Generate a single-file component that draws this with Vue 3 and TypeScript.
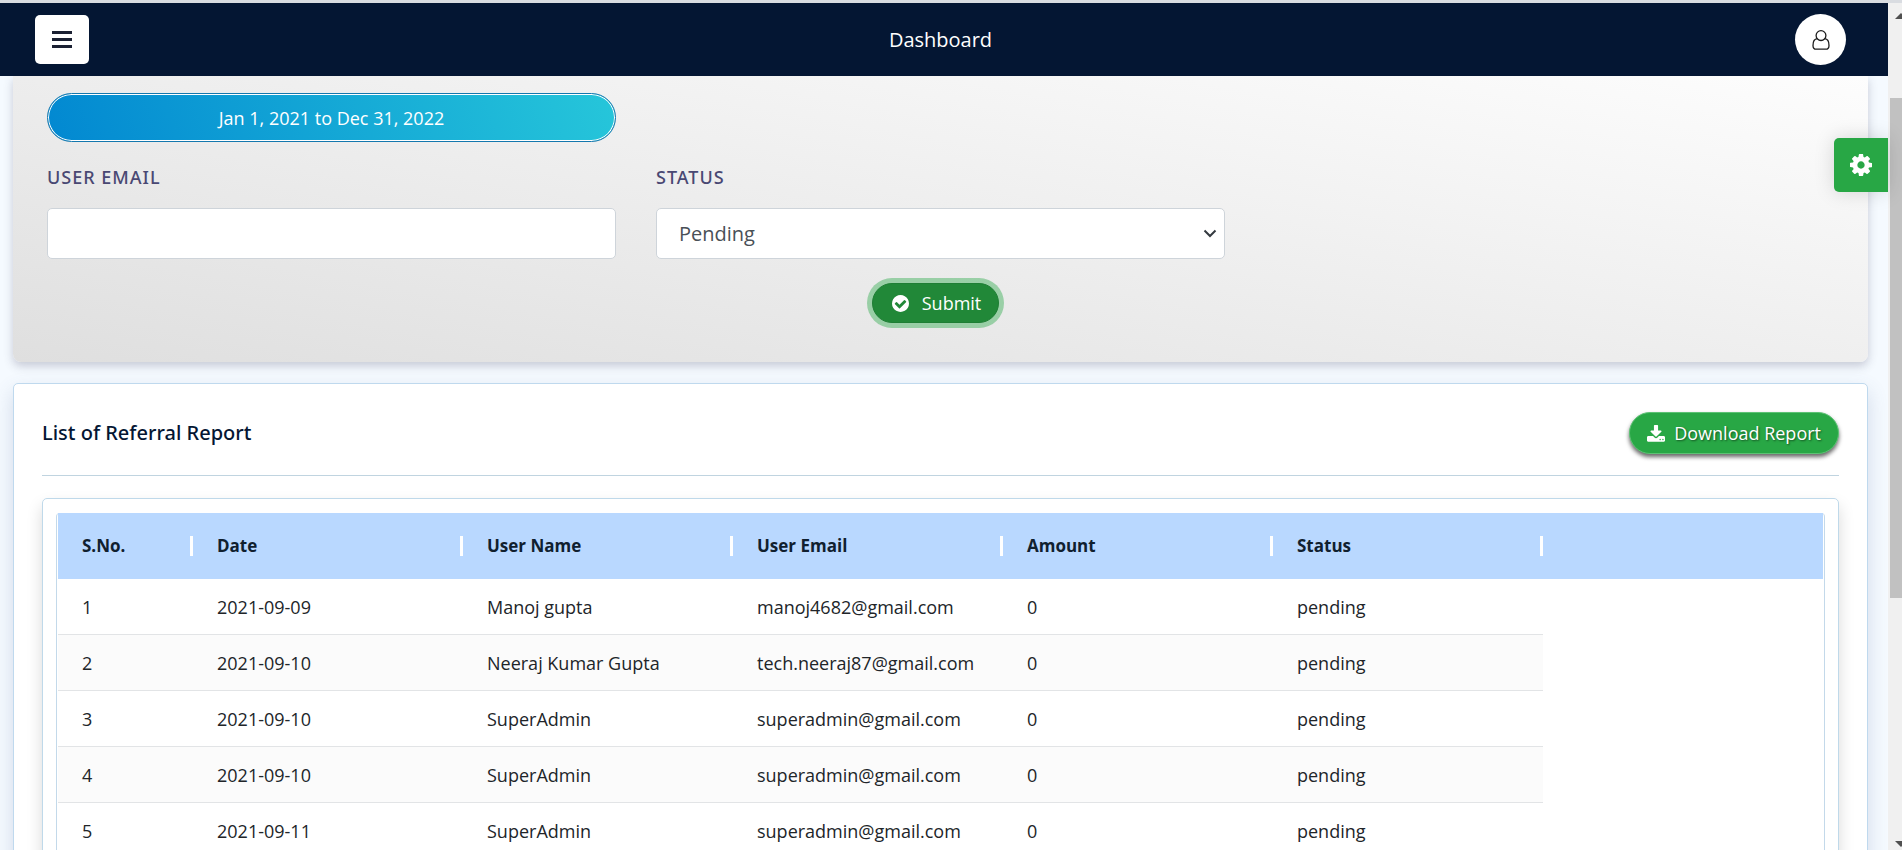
<script setup lang="ts">
import { ref } from 'vue'

interface ReferralRow {
  date: string
  name: string
  email: string
  amount: number
  status: string
}

const email = ref('')
const status = ref('Pending')
const columns: string[] = ['S.No.', 'Date', 'User Name', 'User Email', 'Amount', 'Status']

const rows: ReferralRow[] = [
  { date: '2021-09-09', name: 'Manoj gupta', email: 'manoj4682@gmail.com', amount: 0, status: 'pending' },
  { date: '2021-09-10', name: 'Neeraj Kumar Gupta', email: 'tech.neeraj87@gmail.com', amount: 0, status: 'pending' },
  { date: '2021-09-10', name: 'SuperAdmin', email: 'superadmin@gmail.com', amount: 0, status: 'pending' },
  { date: '2021-09-10', name: 'SuperAdmin', email: 'superadmin@gmail.com', amount: 0, status: 'pending' },
  { date: '2021-09-11', name: 'SuperAdmin', email: 'superadmin@gmail.com', amount: 0, status: 'pending' },
]
</script>

<template>
  <div class="shell">
    <div class="page">
      <header class="topbar">
        <button class="menu-btn" type="button" aria-label="Toggle menu">
          <svg viewBox="0 0 20 17" width="20" height="17" aria-hidden="true">
            <path d="M0 0h20v3H0zM0 7h20v3H0zM0 14h20v3H0z" fill="#1b2133" />
          </svg>
        </button>
        <h1 class="topbar-title">Dashboard</h1>
        <button class="avatar" type="button" aria-label="Account">
          <svg viewBox="0 0 18 20" width="18" height="20" fill="none" stroke="#1c1c1c" stroke-width="1.3" aria-hidden="true">
            <circle cx="9" cy="5.6" r="4.9" />
            <path d="M5.3 8.7C2.4 9 1 12 1 15.4C1 17.6 2.3 19.2 4.2 19.2H13.800C15.700 19.200 17 17.600 17 15.400C17 12 15.600 9 12.700 8.700" />
          </svg>
        </button>
      </header>

      <main class="content">
        <form class="filter-card" @submit.prevent>
          <div class="filter-grid">
            <button class="range-btn" type="button">Jan 1, 2021 to Dec 31, 2022</button>
            <div class="field field-start">
              <label for="user-email">USER EMAIL</label>
              <input id="user-email" v-model="email" class="control" type="text" />
            </div>
            <div class="field">
              <label for="status">STATUS</label>
              <div class="select-wrap">
                <select id="status" v-model="status" class="control">
                  <option>Pending</option>
                </select>
                <svg class="chevron" viewBox="0 0 14 9" width="14" height="9" fill="none" stroke="#343a40" stroke-width="2" aria-hidden="true">
                  <path d="M1.500 1.500L7 7L12.500 1.500" />
                </svg>
              </div>
            </div>
          </div>
          <div class="actions">
            <button class="submit-btn" type="submit">
              <svg viewBox="128 128 1536 1536" width="17" height="17" fill="#fff" aria-hidden="true">
                <path d="M1412 734q0-28-18-46l-91-90q-19-19-45-19t-45 19l-408 407-226-226q-19-19-45-19t-45 19l-91 90q-18 18-18 46 0 27 18 45l362 362q19 19 45 19 27 0 46-19l543-543q18-18 18-45zm252 162q0 209-103 385.500t-279.500 279.500-385.500 103-385.500-103-279.500-279.500-103-385.500 103-385.500 279.500-279.500 385.500-103 385.500 103 279.500 279.500 103 385.500z" />
              </svg>
              <span>Submit</span>
            </button>
          </div>
        </form>

        <section class="report-card">
          <div class="report-head">
            <h2>List of Referral Report</h2>
            <button class="download-btn" type="button">
              <svg viewBox="64 32 1664 1504" width="18" height="17" fill="#fff" aria-hidden="true">
                <path d="M1344 1344q0-26-19-45t-45-19-45 19-19 45 19 45 45 19 45-19 19-45zm256 0q0-26-19-45t-45-19-45 19-19 45 19 45 45 19 45-19 19-45zm128-224v320q0 40-28 68t-68 28h-1472q-40 0-68-28t-28-68v-320q0-40 28-68t68-28h465l135 136q58 56 136 56t136-56l136-136h464q40 0 68 28t28 68zm-325-569q17 41-14 70l-448 448q-18 19-45 19t-45-19l-448-448q-31-29-14-70 17-39 59-39h256v-448q0-26 19-45t45-19h256q26 0 45 19t19 45v448h256q42 0 59 39z" />
              </svg>
              <span>Download Report</span>
            </button>
          </div>

          <div class="table-card">
            <div class="table-frame">
              <table>
                <colgroup>
                  <col class="col-index" />
                  <col v-for="n in 5" :key="n" class="col-data" />
                  <col />
                </colgroup>
                <thead>
                  <tr>
                    <th v-for="c in columns" :key="c" scope="col">
                      <div class="head-cell">{{ c }}</div>
                    </th>
                    <td></td>
                  </tr>
                </thead>
                <tbody>
                  <tr v-for="(r, i) in rows" :key="i">
                    <td>{{ i + 1 }}</td>
                    <td>{{ r.date }}</td>
                    <td>{{ r.name }}</td>
                    <td>{{ r.email }}</td>
                    <td>{{ r.amount }}</td>
                    <td>{{ r.status }}</td>
                  </tr>
                </tbody>
              </table>
            </div>
          </div>
        </section>
      </main>

      <button class="settings-tab" type="button" aria-label="Settings">
        <svg viewBox="0 128 1536 1536" width="22" height="22" fill="#fff" aria-hidden="true">
          <path d="M1024 896q0-106-75-181t-181-75-181 75-75 181 75 181 181 75 181-75 75-181zm512-109v222q0 12-8 23t-20 13l-185 28q-19 54-39 91 35 50 107 138 10 12 10 25t-9 23q-27 37-99 108t-94 71q-12 0-26-9l-138-108q-44 23-91 38-16 136-29 186-7 28-36 28h-222q-14 0-24.500-8.500t-11.500-21.500l-28-184q-49-16-90-37l-141 107q-10 9-25 9-14 0-25-11-126-114-165-168-7-10-7-23 0-12 8-23 15-21 51-66.500t54-70.500q-27-50-41-99l-183-27q-13-2-21-12.500t-8-23.500v-222q0-12 8-23t19-13l186-28q14-46 39-92-40-57-107-138-10-12-10-24 0-10 9-23 26-36 98.500-107.500t94.500-71.500q13 0 26 10l138 107q44-23 91-38 16-136 29-186 7-28 36-28h222q14 0 24.500 8.500t11.500 21.500l28 184q49 16 90 37l142-107q9-9 24-9 13 0 25 10 129 119 165 170 7 8 7 22 0 12-8 23-15 21-51 66.500t-54 70.500q26 50 41 98l183 28q13 2 21 12.500t8 23.500z" />
        </svg>
      </button>
    </div>

    <div class="scroll-track" aria-hidden="true">
      <svg class="arrow" viewBox="0 0 14 6" width="14" height="6"><path d="M7 6L13 0L19 6z" fill="#505050" /></svg>
      <div class="scroll-thumb"></div>
      <svg class="arrow" viewBox="0 0 14 6" width="14" height="6"><path d="M7 0L13 6L19 0z" fill="#505050" /></svg>
    </div>
  </div>
</template>

<style>
body {
  margin: 0;
}
</style>

<style scoped>
.shell {
  box-sizing: border-box;
  display: flex;
  height: 100vh;
  overflow: hidden;
  border-top: 3px solid #d9dce1;
  background: #f5faff;
  font-family: "Open Sans", "Noto Sans", sans-serif;
  font-size: 18px;
  color: #212529;
}
.shell *,
.shell *::before,
.shell *::after {
  box-sizing: border-box;
}
button,
input,
select {
  font: inherit;
  margin: 0;
}
svg {
  display: block;
  flex: none;
}
.page {
  position: relative;
  flex: 1;
  min-width: 0;
}
.topbar {
  position: relative;
  z-index: 2;
  display: grid;
  grid-template-columns: 1fr auto 1fr;
  align-items: center;
  height: 73px;
  padding: 0 42px 0 35px;
  background: #041633;
}
.menu-btn,
.avatar {
  display: flex;
  align-items: center;
  justify-content: center;
  padding: 0;
  border: 0;
  background: #fff;
}
.menu-btn {
  width: 54px;
  height: 49px;
  border-radius: 5px;
}
.avatar {
  justify-self: end;
  width: 51px;
  height: 51px;
  border-radius: 50%;
}
.topbar-title {
  margin: 0;
  font-size: 20px;
  line-height: 28px;
  font-weight: 400;
  color: #fff;
}
.content {
  display: flex;
  flex-direction: column;
  gap: 21px;
  padding: 0 20px 0 13px;
}
.filter-card {
  padding: 17px 34px 34px;
  border-radius: 0 0 8px 8px;
  background: linear-gradient(10deg, #dfdfdf, #fdfdfd);
  box-shadow: 0 4px 10px rgba(60, 60, 90, 0.25);
}
.filter-grid {
  display: grid;
  grid-template-columns: repeat(3, 1fr);
  gap: 22px 40px;
}
.range-btn {
  height: 49px;
  padding: 0;
  border: 1px solid #1478ae;
  border-radius: 25px;
  background: linear-gradient(70deg, #0288d1, #26c6da);
  box-shadow: inset 0 0 0 1px #fff;
  color: #fff;
}
.field-start {
  grid-column: 1;
}
.field label {
  display: block;
  height: 44px;
  font-family: "Noto Sans", "Open Sans", sans-serif;
  line-height: 26px;
  font-weight: 500;
  letter-spacing: 1px;
  color: #494873;
}
.control {
  display: block;
  width: 100%;
  height: 51px;
  padding: 0 22px;
  border: 1px solid #ced4da;
  border-radius: 5px;
  background: #fff;
  color: #495057;
  font-size: 20px;
  appearance: none;
}
.select-wrap {
  position: relative;
}
.chevron {
  position: absolute;
  top: 21px;
  right: 8px;
  pointer-events: none;
}
.actions {
  display: flex;
  justify-content: center;
  padding: 24px 10px 5px 0;
}
.submit-btn {
  display: flex;
  align-items: center;
  gap: 13px;
  height: 40px;
  padding: 0 17px 0 19px;
  border: 1px solid #1e7e34;
  border-radius: 20px;
  background: #218838;
  box-shadow: 0 0 0 5px rgba(72, 180, 97, 0.5);
  color: #fff;
}
.report-card {
  height: 700px;
  padding: 28px 28px 0;
  border: 1px solid #bfd9ee;
  border-radius: 5px;
  background: #fff;
  box-shadow: 0 8px 20px rgba(70, 90, 140, 0.2);
}
.report-head {
  display: flex;
  align-items: flex-start;
  justify-content: space-between;
  height: 64px;
  border-bottom: 1px solid #c0d4e0;
}
.report-head h2 {
  margin: 0;
  font-family: "Noto Sans", "Open Sans", sans-serif;
  font-size: 20px;
  line-height: 42px;
  font-weight: 500;
  color: #041633;
}
.download-btn {
  display: flex;
  align-items: center;
  gap: 9px;
  height: 42px;
  padding: 0 17px;
  border: 1px solid #5cc274;
  border-radius: 21px;
  background: #28a745;
  box-shadow: 0 3px 4px rgba(0, 0, 0, 0.6);
  color: #fff;
  text-shadow: 1px 1px 2px rgba(0, 0, 0, 0.5);
}
.table-card {
  height: 600px;
  margin-top: 22px;
  padding: 14px 13px 0;
  border: 1px solid #bfd9ea;
  border-radius: 5px;
  box-shadow: 0 8px 16px rgba(0, 0, 0, 0.15);
}
.table-frame {
  height: 500px;
  padding: 0 1px;
  border: 1px solid #c3d9ea;
  border-top: 0;
  border-radius: 4px;
}
table {
  width: 100%;
  table-layout: fixed;
  border-collapse: separate;
  border-spacing: 0;
}
.col-index {
  width: 135px;
}
.col-data {
  width: 270px;
}
thead tr {
  background: #b9d8ff;
}
thead th,
thead td {
  height: 66px;
  padding: 0;
  text-align: left;
  color: #10202f;
}
.head-cell {
  padding-left: 24px;
  border-right: 3px solid #fff;
  font-size: 17px;
  line-height: 20px;
  font-weight: 700;
}
tbody td {
  height: 56px;
  padding: 1px 0 0 24px;
  border-bottom: 1px solid #e2e4e6;
  white-space: nowrap;
}
tbody tr:nth-child(even) td {
  background: #fbfbfb;
}
.settings-tab {
  position: absolute;
  z-index: 3;
  top: 135px;
  right: 0;
  display: flex;
  align-items: center;
  justify-content: center;
  width: 54px;
  height: 54px;
  padding: 0;
  border: 0;
  border-radius: 5px 0 0 5px;
  background: #28a745;
  box-shadow: 0 0 20px rgba(0, 0, 0, 0.15);
}
.scroll-track {
  display: flex;
  flex-direction: column;
  width: 14px;
  padding: 10px 0 3px;
  background: #f0f0f0;
}
.scroll-thumb {
  height: 60%;
  margin: 79px 0 auto 2px;
  background: #c1c1c1;
}
</style>
